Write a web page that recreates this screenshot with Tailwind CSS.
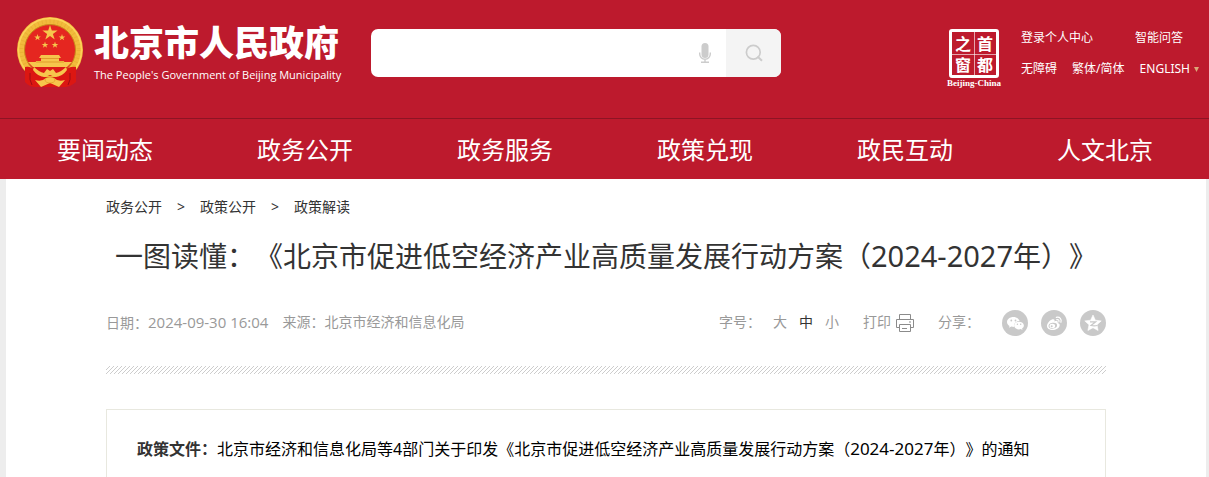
<!DOCTYPE html>
<html lang="zh-CN">
<head>
    <meta charset="UTF-8">
    <meta name="viewport" content="width=device-width, initial-scale=1.0">
    <title>一图读懂 - 北京市人民政府</title>
    <script src="https://cdn.jsdelivr.net/npm/@tailwindcss/browser@4"></script>
</head>
<body class="flex min-h-screen flex-col bg-[#ededed] font-['Noto_Sans','Noto_Sans_CJK_SC',sans-serif] text-[#333] [text-spacing-trim:space-all]">

    <!-- Header -->
    <header class="bg-[#bd1a2d] text-white">
        <div class="flex h-[118px] items-start pl-4 pr-[10px]">
            <a href="#" class="mt-4 flex items-start" aria-label="北京市人民政府">
                <svg class="h-[72px] w-[68px]" viewBox="0 0 68 72">
                    <path d="M10 48 L11 66 Q14 71 22 71 L46 71 Q54 71 57 66 L60 50 L48 56 L20 56 Z" fill="#dc1712"/>
                    <circle cx="34" cy="34" r="33" fill="#f2bb3c"/>
                    <circle cx="34" cy="34" r="29" fill="none" stroke="#dc9a20" stroke-width="5" stroke-dasharray="1 3" opacity=".3"/>
                    <circle cx="34" cy="34" r="31.5" fill="none" stroke="#ffda62" stroke-width="1.5" opacity=".8"/>
                    <circle cx="34" cy="34" r="25.5" fill="#e52620" stroke="#c98a1b"/>
                    <g fill="#f6c64c">
                        <path d="M34 9 L35.800 14.500 L41.600 14.500 L36.900 17.900 L38.700 23.400 L34 20 L29.300 23.400 L31.100 17.900 L26.400 14.500 L32.200 14.500 Z"/>
                        <path id="star" d="M21.500 18 L22.300 20.400 H24.800 L22.800 21.900 L23.600 24.300 L21.500 22.800 L19.400 24.300 L20.200 21.900 L18.200 20.400 H20.700 Z"/>
                        <use href="#star" x="7.500" y="7.500"/>
                        <use href="#star" x="17.500" y="7.500"/>
                        <use href="#star" x="24.500"/>
                        <path d="M25 39 H43 L45 42 H23 Z M25 42 H43 V45 H48 L49 49 H19 L20 45 H25 Z"/>
                        <path d="M12 46 H56 L51 51 H17 Z"/>
                    </g>
                    <path d="M25 42.500 H43 M20 46 H48" stroke="#d88a1e" stroke-width=".7"/>
                    <path d="M17 51 H51 Q44 60 34 60 Q24 60 17 51 Z" fill="#dc1a16"/>
                    <path d="M9 51 Q15 50 20 55 L28 61 H40 L48 55 Q53 50 60 51 L60 66 Q52 73 43 70 L34 68 L25 70 Q15 73 9 66 Z" fill="#dc1712"/>
                    <path d="M18 51 Q23 56 28 57 L31 53 L34 55 L37 53 L40 57 Q45 56 50 51 L51 54 Q46 61 39 61 L34 59 L29 61 Q22 61 17 54 Z" fill="#f6c64c"/>
                    <path d="M19 64 Q26 66 30 62 H38 Q42 66 49 64 L43 71 L34 67 L25 71 Z" fill="#f6c64c"/>
                    <ellipse cx="34" cy="64" rx="5" ry="3" fill="#f6c64c" stroke="#dc951f" stroke-width=".6"/>
                    <path d="M14 57 Q13 64 16 69 M54 57 Q55 64 52 69" fill="none" stroke="#9f0c14"/>
                </svg>
                <span class="ml-[10px] mt-2 block w-[267px] whitespace-nowrap">
                    <strong class="block text-[35px] leading-[38px] font-black">北京市人民政府</strong>
                    <span class="mt-[5px] block font-['Open_Sans','Noto_Sans',sans-serif] text-[11px] leading-4">The People's Government of Beijing Municipality</span>
                </span>
            </a>

            <form class="ml-[10px] mt-[29px] flex h-12 w-[410px] shrink-0 overflow-hidden rounded-[7px] bg-white">
                <input type="text" aria-label="搜索" class="min-w-0 flex-1 px-4 text-base text-[#333] outline-none">
                <button type="button" aria-label="语音输入" class="flex w-[42px] items-center justify-center text-[#ccc]">
                    <svg class="h-5 w-3" viewBox="0 0 12 20" fill="none" stroke="currentColor">
                        <rect x="2.500" y="0" width="7" height="15" rx="3.500" fill="currentColor" stroke="none"/>
                        <path d="M.7 9.500 V11 A5.300 5.300 0 0 0 11.300 11 V9.500 M6 16.300 V19 M2 19.200 H10" stroke-width="1.400"/>
                    </svg>
                </button>
                <button type="submit" aria-label="查询" class="flex w-[55px] items-center justify-center bg-[#f4f4f4] text-[#ccc]">
                    <svg class="h-[18px] w-[18px]" viewBox="0 0 18 18" fill="none" stroke="currentColor" stroke-width="1.700">
                        <circle cx="8.300" cy="8.300" r="6.900"/>
                        <path d="M12.500 12.500 L17 16.800" stroke-width="2"/>
                    </svg>
                </button>
            </form>

            <div class="ml-auto mt-[29px] flex">
                <a href="#" class="flex w-14 flex-col items-center" aria-label="首都之窗">
                    <span class="relative grid h-[49px] w-[50px] grid-cols-2 grid-rows-2 place-items-center rounded-[3px] border-[3px] border-white font-['Noto_Sans_CJK_SC',sans-serif] text-[16px] leading-4 font-bold">
                        <span>之</span><span>首</span><span>窗</span><span>都</span>
                        <span class="absolute inset-y-0 left-1/2 w-px bg-white/60"></span>
                        <span class="absolute inset-x-0 top-1/2 h-px bg-white/60"></span>
                    </span>
                    <span class="font-['Liberation_Serif',serif] text-[9px] leading-[10px] font-bold whitespace-nowrap">Beijing-China</span>
                </a>
                <div class="ml-[19px] w-[178px] text-[12px] leading-[18px] whitespace-nowrap">
                    <div class="flex justify-between pr-4">
                        <a href="#">登录个人中心</a>
                        <a href="#">智能问答</a>
                    </div>
                    <div class="mt-[13px] flex items-center justify-between">
                        <a href="#">无障碍</a>
                        <a href="#">繁体/简体</a>
                        <a href="#" class="flex items-center">ENGLISH
                            <svg class="ml-1 h-[5px] w-[5px]" viewBox="0 0 5 5"><path d="M0 0 H5 L2.500 5 Z" fill="#dba878"/></svg>
                        </a>
                    </div>
                </div>
            </div>
        </div>

        <nav class="border-t border-[#8d1424] pl-[5px] pr-1">
            <ul class="grid h-[60px] grid-cols-6 pt-px text-center text-[24px] leading-[60px]">
                <li><a href="#">要闻动态</a></li>
                <li><a href="#">政务公开</a></li>
                <li><a href="#">政务服务</a></li>
                <li><a href="#">政策兑现</a></li>
                <li><a href="#">政民互动</a></li>
                <li><a href="#">人文北京</a></li>
            </ul>
        </nav>
    </header>

    <!-- Article -->
    <main class="mr-[3px] ml-[6px] flex-1 bg-white px-[100px]">
        <div class="flex gap-[15px] pt-[18px] text-[14px] leading-5">
            <a href="#">政务公开</a>
            <span>&gt;</span>
            <a href="#">政策公开</a>
            <span>&gt;</span>
            <a href="#">政策解读</a>
        </div>

        <h1 class="mt-[19px] text-center text-[28px] leading-10 whitespace-nowrap">一图读懂：《北京市促进低空经济产业高质量发展行动方案（<span class="text-[29px]">2024-2027</span>年）》</h1>

        <div class="mt-8 flex h-[30px] items-center text-[14px] leading-5 text-[#999]">
            <span class="pb-0.5">日期：<span class="font-['Open_Sans','Noto_Sans',sans-serif] text-[15px]">2024-09-30 16:04</span></span>
            <span class="ml-[14px] pb-0.5">来源：北京市经济和信息化局</span>
            <div class="ml-auto flex items-center">
                <span class="pb-0.5">字号：</span>
                <button type="button" class="ml-3 pb-0.5">大</button>
                <button type="button" class="ml-3 pb-0.5 text-[#333]">中</button>
                <button type="button" class="ml-3 pb-0.5">小</button>
                <button type="button" class="ml-6 flex items-center gap-[5px]"><span class="pb-0.5">打印</span>
                    <svg class="h-[18px] w-[18px]" viewBox="0 0 18 18" fill="none" stroke="#8b8b8b">
                        <path d="M3.500 5.500 V.5 H14.500 V5.500 M3.500 13.500 H.5 V5.500 H17.500 V13.500 H14.500 M3.500 10.500 H14.500 V17.500 H3.500 Z M6 14.500 H11 M13 8 H15"/>
                    </svg>
                </button>
                <span class="ml-6 pb-0.5">分享：</span>
                <div class="ml-[22px] flex gap-[13px]">
                    <a href="#" aria-label="微信">
                        <svg class="h-[26px] w-[26px]" viewBox="0 0 26 26">
                            <circle cx="13" cy="13" r="13" fill="#c9c9c9"/>
                            <path d="M11.500 7 C7.800 7 5 9.200 5 12 C5 13.700 6 15 7.500 15.900 L7 17.800 L9.300 16.600 L12 16.900 C11.400 13.500 14 11.200 17.600 11.100 C17 8.700 14.600 7 11.500 7 Z" fill="#fff"/>
                            <path d="M17 11.800 C14.200 11.800 12.100 13.500 12.100 15.600 C12.100 17.700 14.200 19.400 17 19.400 L18.800 19.100 L20.500 20 L20.100 18.500 C21.300 17.800 21.900 16.800 21.900 15.600 C21.900 13.500 19.700 11.800 17 11.800 Z" fill="#fff"/>
                            <g fill="#c9c9c9"><circle cx="9.300" cy="10.500" r=".9"/><circle cx="13.500" cy="10.500" r=".9"/><circle cx="15.400" cy="14.300" r=".7"/><circle cx="18.700" cy="14.300" r=".7"/></g>
                        </svg>
                    </a>
                    <a href="#" aria-label="微博">
                        <svg class="h-[26px] w-[26px]" viewBox="0 0 26 26">
                            <circle cx="13" cy="13" r="13" fill="#c9c9c9"/>
                            <path d="M11.500 9.300 C13 8.800 14 9.500 13.400 11.400 C15.500 10.600 17.400 10.900 16.700 13 C18.300 13.500 19 14.400 18.600 15.800 C18 18.300 15 20 11.500 20 C8.300 20 6 18.400 6 16 C6 13.500 8.800 10.200 11.500 9.300 Z" fill="#fff"/>
                            <ellipse cx="11.800" cy="15.700" rx="4.300" ry="2.900" fill="#c9c9c9" transform="rotate(-8 11.800 15.700)"/>
                            <ellipse cx="11.300" cy="15.900" rx="2.800" ry="2.200" fill="#fff"/>
                            <circle cx="10.700" cy="16.300" r="1" fill="#c9c9c9"/>
                            <path d="M15.300 7.300 C18.800 6.500 21 9.200 19.900 12.300 M15.800 9.600 C17.500 9.300 18.400 10.400 17.900 11.900" fill="none" stroke="#fff" stroke-width="1.200" stroke-linecap="round"/>
                        </svg>
                    </a>
                    <a href="#" aria-label="QQ空间">
                        <svg class="h-[26px] w-[26px]" viewBox="0 0 26 26">
                            <circle cx="13" cy="13" r="13" fill="#c9c9c9"/>
                            <path d="M13 5 L15.400 10.200 L21.200 10.900 L17 14.800 L18.100 20.500 L13 17.700 L7.900 20.500 L9 14.800 L4.800 10.900 L10.600 10.200 Z" fill="#fff" stroke="#fff" stroke-width=".6" stroke-linejoin="round"/>
                            <path d="M10 11.800 H15.700 L11 15.500 Q14 16.200 17.500 15.500" fill="none" stroke="#c9c9c9" stroke-width="1.200"/>
                        </svg>
                    </a>
                </div>
            </div>
        </div>

        <!-- Hatched divider -->
        <svg class="mt-7 block h-2 w-full" aria-hidden="true">
            <defs>
                <pattern id="hatch" width="4" height="4" patternUnits="userSpaceOnUse">
                    <path d="M-1 1 L1 -1 M0 4 L4 0 M3 5 L5 3" stroke="#cdcdcd" stroke-width="1"/>
                </pattern>
            </defs>
            <rect width="100%" height="8" fill="url(#hatch)"/>
        </svg>

        <section class="mt-[35px] border border-[#e8e8df] px-[30px] pt-[25px] pb-8 text-[16px] leading-7">
            <p class="whitespace-nowrap"><strong>政策文件：</strong><a href="#" class="text-black">北京市经济和信息化局等4部门关于印发《北京市促进低空经济产业高质量发展行动方案（<span class="text-[17px]">2024-2027</span>年）》的通知</a></p>
        </section>
    </main>
</body>
</html>
